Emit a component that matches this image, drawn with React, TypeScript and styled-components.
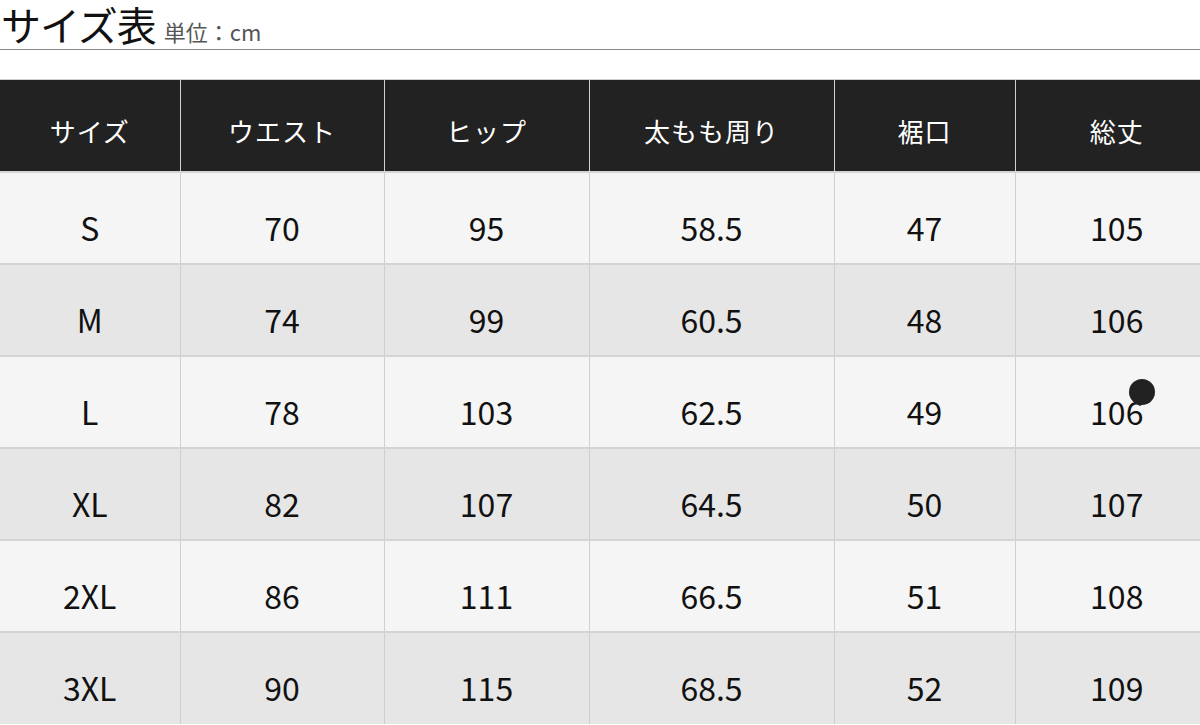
import styled, { createGlobalStyle } from 'styled-components'

const GlobalStyle = createGlobalStyle`
  html, body {
    margin: 0;
    padding: 0;
    background: #fff;
  }
  body {
    font-family: "Noto Sans CJK JP", "Noto Sans", sans-serif;
    color: #222;
  }
`

const Page = styled.div`
  width: 1200px;
  overflow: hidden;
`

const TitleBar = styled.div`
  display: flex;
  align-items: baseline;
  gap: 8px;
  height: 50px;
  padding-left: 1px;
  border-bottom: 1px solid #8a8a8a;
  box-sizing: border-box;
`

const Title = styled.h1`
  margin: 0;
  font-size: 40px;
  font-weight: 400;
  line-height: 48px;
  letter-spacing: -1px;
  color: #111;
`

const Unit = styled.span`
  font-size: 22px;
  color: #555;
`

const Table = styled.table`
  margin-top: 29px;
  width: 1218px;
  border-collapse: collapse;
  table-layout: fixed;
`

const HeadCell = styled.th`
  height: 92px;
  padding: 10px 0 0;
  background: #222;
  color: #fff;
  font-size: 26px;
  font-weight: 400;
  letter-spacing: 1px;
  border-left: 1px solid #cfcfcf;
  border-top: 1px solid #cfcfcf;
  box-sizing: border-box;
  &:first-child {
    border-left: none;
  }
`

const Row = styled.tr<{ $shade: boolean }>`
  background: ${p => (p.$shade ? '#e6e6e6' : '#f5f5f5')};
`

const Cell = styled.td`
  position: relative;
  height: 92px;
  padding: 18px 0 0;
  text-align: center;
  font-size: 32px;
  color: #111;
  border-top: 2px solid #d4d4d4;
  border-left: 1px solid #cfcfcf;
  box-sizing: border-box;
  &:first-child {
    border-left: none;
  }
`

const Dot = styled.span`
  position: absolute;
  left: 113px;
  top: 22px;
  width: 26px;
  height: 26px;
  border-radius: 50%;
  background: #222;
`

const widths = [180, 204, 205, 245, 181, 203]
const headers = ['サイズ', 'ウエスト', 'ヒップ', '太もも周り', '裾口', '総丈']
const rows = [
  ['S', '70', '95', '58.5', '47', '105'],
  ['M', '74', '99', '60.5', '48', '106'],
  ['L', '78', '103', '62.5', '49', '106'],
  ['XL', '82', '107', '64.5', '50', '107'],
  ['2XL', '86', '111', '66.5', '51', '108'],
  ['3XL', '90', '115', '68.5', '52', '109']
]

export default function App() {
  return (
    <Page>
      <GlobalStyle />
      <TitleBar>
        <Title>サイズ表</Title>
        <Unit>単位：cm</Unit>
      </TitleBar>
      <Table>
        <colgroup>
          {widths.map((w, i) => (
            <col key={i} style={{ width: w }} />
          ))}
        </colgroup>
        <thead>
          <tr>
            {headers.map(h => (
              <HeadCell key={h}>{h}</HeadCell>
            ))}
          </tr>
        </thead>
        <tbody>
          {rows.map((r, ri) => (
            <Row key={r[0]} $shade={ri % 2 === 1}>
              {r.map((v, ci) => (
                <Cell key={ci}>
                  {v}
                  {ri === 2 && ci === 5 && <Dot />}
                </Cell>
              ))}
            </Row>
          ))}
        </tbody>
      </Table>
    </Page>
  )
}
